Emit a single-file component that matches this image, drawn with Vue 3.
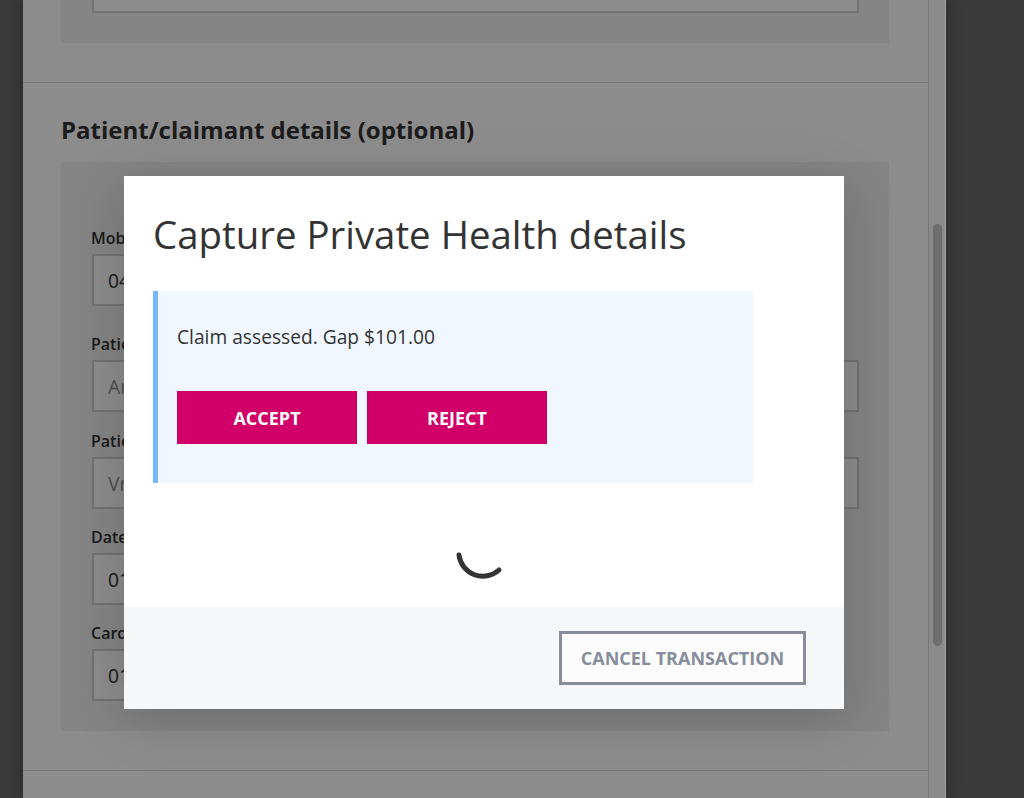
<template>
  <div class="screen">
    <div class="page">
      <div class="content">
        <section class="top-section">
          <div class="grey-box top-box">
            <div class="top-input"></div>
          </div>
        </section>

        <section class="patient-section">
          <h3>Patient/claimant details (optional)</h3>
          <div class="grey-box form-box">
            <div v-for="f in fields" :key="f.label" class="field" :class="f.cls">
              <label>{{ f.label }}</label>
              <input
                :class="{ wide: f.wide }"
                :value="f.value"
                :placeholder="f.placeholder"
                readonly
              />
            </div>
          </div>
        </section>
      </div>
      <div class="scroll-track">
        <div class="scroll-thumb"></div>
      </div>
    </div>

    <div class="overlay">
      <div class="modal">
        <div class="modal-body">
          <h2>Capture Private Health details</h2>
          <div class="notice">
            <p>Claim assessed. Gap $101.00</p>
            <div class="notice-actions">
              <button class="btn-primary">ACCEPT</button>
              <button class="btn-primary">REJECT</button>
            </div>
          </div>
          <svg class="spinner" width="60" height="60" viewBox="0 0 60 60">
            <path d="M5 34 A24 24 0 0 0 45 49" fill="none" stroke="#333" stroke-width="5" stroke-linecap="round" />
          </svg>
        </div>
        <div class="modal-footer">
          <button class="btn-cancel">CANCEL TRANSACTION</button>
        </div>
      </div>
    </div>
    <div class="page-edge"></div>
  </div>
</template>

<script setup>
const fields = [
  { label: 'Mobile', value: '04', cls: 'first' },
  { label: 'Patient first name', placeholder: 'An', wide: true, cls: 'gap-17' },
  { label: 'Patient last name', placeholder: 'Vr', wide: true },
  { label: 'Date of birth', value: '01' },
  { label: 'Card issue date', value: '01' }
]
</script>

<style>
html, body {
  margin: 0;
  overflow: hidden;
}
</style>

<style scoped>
.screen {
  position: relative;
  width: 1024px;
  height: 798px;
  overflow: hidden;
  background: #6a6a6a;
  font-family: "Open Sans", "Liberation Sans", sans-serif;
}

.page {
  display: flex;
  width: 923px;
  height: 798px;
  margin-left: 23px;
  background: #fff;
  box-shadow: 0 0 14px rgba(0, 0, 0, 0.3);
}

.content {
  width: 905px;
}

.grey-box {
  background: #f1f1f1;
  margin: 0 39px 0 38px;
}

.top-section {
  height: 82px;
  border-bottom: 1px solid #d9d9d9;
}

.top-box {
  height: 43px;
  padding: 0 30px 0 31px;
  box-sizing: border-box;
}

.top-input {
  height: 13px;
  box-sizing: border-box;
  border: 2px solid #d0d0d0;
  border-top: 0;
  background: #fff;
}

.patient-section {
  border-bottom: 1px solid #d9d9d9;
  height: 687px;
}

h3 {
  margin: 0;
  padding: 29px 0 15px 38px;
  font-size: 24px;
  line-height: 35px;
  font-weight: 700;
  color: #333;
}

.form-box {
  padding: 64px 30px 30px 30px;
}

.field {
  margin-bottom: 16px;
}

.field:last-child {
  margin-bottom: 0;
}

.field.first {
  margin-bottom: 26px;
}

.field.gap-17 {
  margin-bottom: 17px;
}

.field label {
  display: block;
  margin-bottom: 4px;
  font-size: 16px;
  line-height: 24px;
  font-weight: 600;
  color: #333;
}

.field input {
  display: block;
  width: 320px;
  height: 52px;
  box-sizing: border-box;
  margin-left: 1px;
  padding: 0 14px;
  border: 2px solid #d0d0d0;
  border-radius: 0;
  outline: none;
  background: #fff;
  font-family: inherit;
  font-size: 19.2px;
  color: #333;
}

.field input.wide {
  width: calc(100% - 1px);
}

.field input::placeholder {
  color: #8f8f8f;
  opacity: 1;
}

.scroll-track {
  width: 17px;
  border-left: 1px solid #d9d9d9;
  background: #fcfcfc;
}

.scroll-thumb {
  width: 9px;
  height: 422px;
  margin: 224px 0 0 4px;
  border-radius: 5px;
  background: #c8c8c8;
}

.overlay {
  position: absolute;
  inset: 0;
  padding: 176px 0 0 124px;
  box-sizing: border-box;
  background: rgba(0, 0, 0, 0.45);
}

.page-edge {
  position: absolute;
  left: 945px;
  top: 0;
  width: 1px;
  height: 798px;
  background: #a2a2a2;
}

.modal {
  width: 720px;
  height: 533px;
  display: flex;
  flex-direction: column;
  background: #fff;
  box-shadow: 0 10px 50px rgba(0, 0, 0, 0.18);
}

.modal-body {
  flex: 1;
  display: flex;
  flex-direction: column;
  padding: 32px 29px 0;
}

h2 {
  margin: 0 0 31px;
  font-size: 38.4px;
  line-height: 52px;
  font-weight: 400;
  color: #333;
}

.notice {
  width: 600px;
  height: 192px;
  box-sizing: border-box;
  padding: 31px 0 0 19px;
  border-left: 5px solid #74b9ff;
  background: #f0f7ff;
}

.notice p {
  margin: 0 0 39px;
  font-size: 19.2px;
  line-height: 30px;
  color: #333;
}

.notice-actions {
  display: flex;
  gap: 10px;
}

.btn-primary {
  width: 180px;
  height: 53px;
  border: 0;
  padding: 0;
  background: #d10068;
  color: #fff;
  font-family: inherit;
  font-size: 18px;
  font-weight: 700;
}

.spinner {
  align-self: center;
  margin-top: 38px;
}

.modal-footer {
  height: 102px;
  box-sizing: border-box;
  display: flex;
  justify-content: flex-end;
  padding: 24px 38px 0 0;
  background: #f6f7f9;
}

.btn-cancel {
  width: 247px;
  height: 54px;
  padding: 0;
  border: 3px solid #878d9b;
  background: #fcfcfd;
  color: #878d9b;
  font-family: inherit;
  font-size: 18px;
  font-weight: 700;
}
</style>
